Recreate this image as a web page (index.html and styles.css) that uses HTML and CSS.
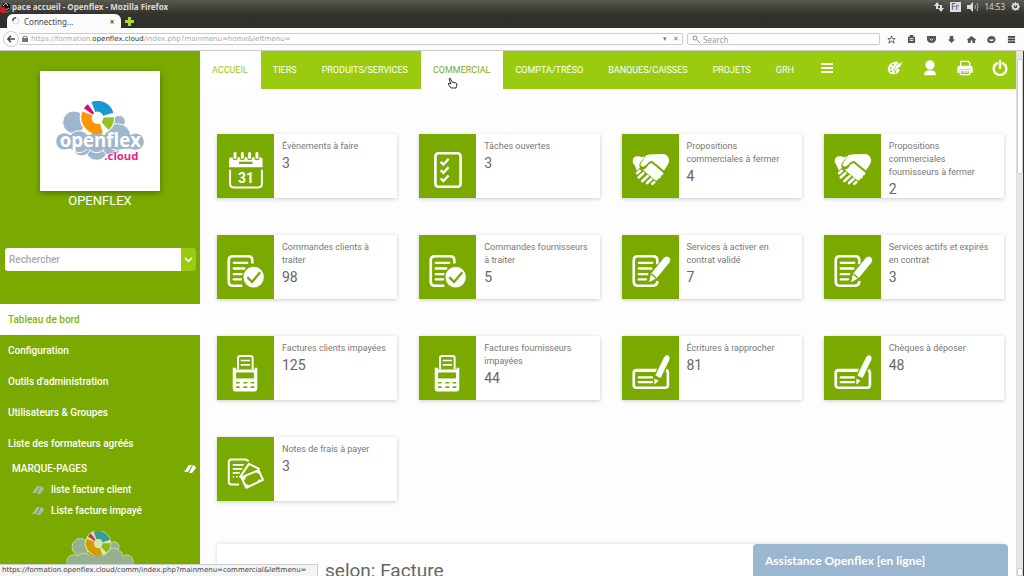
FILE: index.html
```html
<!DOCTYPE html>
<html lang="fr">
<head>
<meta charset="utf-8">
<title>Espace accueil - Openflex</title>
<link rel="stylesheet" href="styles.css">
</head>
<body>
<svg class="defs" aria-hidden="true">
  <symbol id="doc" viewBox="0 0 171 193">
    <path d="M76 153H48Q35 153 35 141V76Q35 64 48 64H93Q106 64 106 76V86" fill="none" stroke="#fff" stroke-width="8"/>
    <path d="M50 84H91M50 101H82M50 118H74M50 134H72" stroke="#fff" stroke-width="7" stroke-linecap="round"/>
  </symbol>
  <symbol id="order" viewBox="0 0 171 193">
    <use href="#doc" width="171" height="193"/>
    <circle cx="110" cy="127" r="34" fill="#7aaa00"/><circle cx="110" cy="127" r="31" fill="#fff"/>
    <path d="M91 127l14 15 25-30" fill="none" stroke="#7aaa00" stroke-width="7"/>
  </symbol>
  <symbol id="contract" viewBox="0 0 171 193">
    <path d="M106 88V76Q106 64 93 64H48Q35 64 35 76V141Q35 153 48 153H93Q106 153 106 139" fill="none" stroke="#fff" stroke-width="8"/>
    <path d="M50 84H91M50 101H88M50 118H76M50 134H72" stroke="#fff" stroke-width="7" stroke-linecap="round"/>
    <path d="M79 145l7-29 40-49q8-7 17 0 6 7 1 16l-39 48z" fill="#fff" stroke="#7aaa00" stroke-width="3"/>
    <path d="M88 117l15 14" stroke="#7aaa00" stroke-width="4"/>
  </symbol>
  <symbol id="hands" viewBox="0 0 171 193">
    <path d="M32 78Q34 68 46 67Q54 66 58 70L70 67L53 88Q50 96 54 102L44 110Q40 96 32 86Z" fill="#fff"/>
    <path d="M73 64Q84 60 98 61L124 60Q138 62 142 78Q142 90 126 110L90 81Q80 83 73 93Q64 102 56 96Q54 91 58 86Z" fill="#fff"/>
    <path d="M78 94Q82 87 90 88L124 117Q125 126 116 125Q119 135 109 134Q109 143 99 139L62 108Q72 106 78 94Z" fill="#fff"/>
    <path d="M45 118l8-7M50 131l14-13M61 142l16-15M75 148l13-12M91 150l6-5" stroke="#fff" stroke-width="8" stroke-linecap="round"/>
  </symbol>
  <symbol id="terminal" viewBox="0 0 171 193">
    <path d="M63 100V66Q63 60 69 60H101Q107 60 107 66V100" fill="none" stroke="#fff" stroke-width="6"/>
    <path d="M71 74H99M71 87H99" stroke="#fff" stroke-width="5"/>
    <path d="M47 96H57V101H113V96H121V160Q121 167 114 167H54Q47 167 47 160Z" fill="#fff"/>
    <path d="M57 110H111V128H57Z" fill="#7aaa00"/>
    <path d="M57 141H68M79 141H91M101 141H112M57 154H68M79 154H91M101 154H112" stroke="#7aaa00" stroke-width="5"/>
  </symbol>
  <symbol id="cheque" viewBox="0 0 171 193">
    <rect x="35" y="103" width="103" height="53" rx="8" fill="none" stroke="#fff" stroke-width="8"/>
    <path d="M38 104H136" stroke="#fff" stroke-width="9"/>
    <path d="M50 125H90M50 139H90" stroke="#fff" stroke-width="7" stroke-linecap="round"/>
    <path d="M96 152L94 122 121 66Q128 56 140 60 149 66 144 78L119 134Z" fill="#7aaa00"/>
    <path d="M100 119L126 65Q132 56 139 59 145 63 142 72L116 127ZM97 129L110 134 97 147Z" fill="#fff"/>
  </symbol>
  <symbol id="tag" viewBox="0 0 12 10"><path d="M0 8L5 1H8L4 8ZM5 9L9 1 11 2 12 4 8 9Z" fill="currentColor"/></symbol>
  <symbol id="cloud" viewBox="160 120 270 180">
    <g class="cloud-body"><circle cx="217" cy="184" r="34"/><circle cx="352" cy="182" r="19"/><circle cx="285" cy="265" r="33"/><circle cx="240" cy="258" r="27"/><circle cx="330" cy="255" r="29"/><circle cx="348" cy="228" r="40"/><circle cx="188" cy="241" r="26"/><circle cx="402" cy="242" r="26"/><circle cx="232" cy="242" r="33"/><circle cx="285" cy="244" r="31"/></g>
    <rect x="180" y="222" width="232" height="41" rx="18" class="cloud-fill"/>
    <path d="M287 118A52 52 0 0 1 340 170 52 52 0 0 1 312 217Q285 205 262 216A52 52 0 0 1 287 118Z" fill="#fff"/>
    <g fill="none" stroke-width="32">
      <path d="M275 138A34 34 0 0 1 320 160" stroke="#1b98d4"/>
      <path d="M321 169A34 34 0 0 1 310 195" stroke="#94c11f"/>
      <path d="M299 201A34 34 0 0 1 257 157" stroke="#ff9500"/>
      <path d="M260 151A34 34 0 0 1 268 143" stroke="#e6007e"/>
    </g>
    <circle cx="287" cy="172" r="17" fill="#fff"/>
  </symbol>
</svg>

<header class="browser">
  <div class="titlebar">
    <svg class="record" viewBox="0 0 12 12"><circle cx="6" cy="6" r="5" fill="#111" stroke="#777"/><path d="M3 5l3-3 2 3M6 9l3-2" stroke="#ccc" fill="none"/><circle cx="3" cy="9" r="3" fill="#e11"/></svg>
    <span class="window-title">pace accueil - Openflex - Mozilla Firefox</span>
    <div class="tray">
      <svg viewBox="0 0 10 10" width="10" height="10"><path d="M3 7V3M7 3v4" stroke="#ddd" stroke-width="2"/><path d="M0 4l3-4 3 4zM4 6l3 4 3-4z" fill="#ddd"/></svg>
      <span class="lang">Fr</span>
      <svg viewBox="0 0 12 10" width="12" height="10"><path d="M0 3h3l3-3v10L3 7H0z" fill="#ddd"/><path d="M8 3q1 2 0 4M10 1q2 4 0 8" stroke="#aaa" fill="none"/></svg>
      <span class="clock">14:53</span>
      <svg viewBox="0 0 10 10" width="9" height="9"><circle cx="5" cy="5" r="3" fill="none" stroke="#ddd" stroke-width="2"/><circle cx="5" cy="5" r="4" fill="none" stroke="#ddd" stroke-width="2" stroke-dasharray="1 2"/><path d="M5 0v5" stroke="#ddd"/></svg>
    </div>
  </div>
  <div class="tabstrip">
    <div class="tab"><svg viewBox="0 0 10 10" width="8" height="8"><circle cx="5" cy="5" r="4" fill="none" stroke="#ccc"/><path d="M5 1A4 4 0 0 0 1 5" fill="none" stroke="#555" stroke-width="2"/></svg><span class="tab-title">Connecting…</span><button class="tab-close" aria-label="Close tab">×</button></div>
    <button class="tab-new" aria-label="New tab"><svg viewBox="0 0 9 9" width="9" height="9"><path d="M3 0h3v3h3v3H6v3H3V6H0V3h3z" fill="#a6d838"/></svg></button>
  </div>
  <div class="toolbar">
    <button class="back" aria-label="Back"><svg viewBox="0 0 10 10" width="8" height="8"><path d="M5 1L1 5l4 4M1 5h9" fill="none" stroke="#444" stroke-width="2"/></svg></button>
    <div class="urlbar">
      <svg viewBox="0 0 6 8" width="6" height="8"><path d="M0 3h6v4H0z" fill="#777"/><path d="M1 4V2q2-2 4 0v2" fill="none" stroke="#777"/></svg>
      <div class="url" role="textbox" aria-label="Address" contenteditable="true">https://formation.<span class="domain">openflex.cloud</span>/index.php?mainmenu=home&amp;leftmenu=</div>
      <span class="url-tools">▾</span><span class="url-tools">✕</span>
    </div>
    <label class="websearch"><svg viewBox="0 0 8 8" width="8" height="8"><circle cx="3" cy="3" r="2" fill="none" stroke="#888"/><path d="M5 5l3 3" stroke="#888"/></svg><input type="text" placeholder="Search" aria-label="Search"></label>
    <div class="tools">
      <svg viewBox="0 0 10 10"><path d="M5 1l1 3 3 0-2 2 1 3-3-2-3 2 1-3-2-2 3 0z" fill="none" stroke="#555"/></svg>
      <svg viewBox="0 0 10 10"><path d="M1 2h8v7H1zM3 2V0h4v2" fill="#555"/><path d="M3 4h4M3 6h4" stroke="#fff"/></svg>
      <svg viewBox="0 0 10 10"><path d="M0 1h10v4Q9 9 5 9 1 9 0 5z" fill="#555"/><path d="M3 4l2 2 2-2" fill="none" stroke="#fff"/></svg>
      <svg viewBox="0 0 10 10"><path d="M3 1h4v4h2L5 9 1 5h2z" fill="#555"/></svg>
      <svg viewBox="0 0 10 10"><path d="M5 1L0 5l1 1v3h3V6h2v3h3V6l1-1z" fill="#555"/></svg>
      <svg viewBox="0 0 10 10"><path d="M1 8Q-1 5 2 2 5 0 8 2 11 5 8 8 5 10 1 8z" fill="#555"/><path d="M2 5q3 4 6 0z" fill="#fff"/></svg>
      <svg viewBox="0 0 10 10"><path d="M1 2h8M1 5h8M1 8h8" stroke="#444" stroke-width="2"/></svg>
    </div>
  </div>
</header>

<div class="viewport">
  <aside class="sidebar">
    <div class="logo"><svg viewBox="160 120 270 180" width="90" height="60" role="img" aria-label="openflex.cloud">
      <use href="#cloud" x="160" y="120" width="270" height="180"/>
      <text class="logo-name" x="296" y="258">openflex</text>
      <text class="logo-cloud" x="308" y="297">.cloud</text>
    </svg></div>
    <div class="company">OPENFLEX</div>
    <form class="search"><input type="text" placeholder="Rechercher" aria-label="Rechercher"><button type="button" aria-label="Options"><svg viewBox="0 0 10 8" width="9" height="7"><path d="M1 2l4 4 4-4" fill="none" stroke="#fff" stroke-width="2"/></svg></button></form>
    <nav class="menu">
      <a class="current" href="#">Tableau de bord</a>
      <a href="#">Configuration</a>
      <a href="#">Outils d'administration</a>
      <a href="#">Utilisateurs &amp; Groupes</a>
      <a href="#">Liste des formateurs agréés</a>
    </nav>
    <div class="bookmarks-head"><span>MARQUE-PAGES</span><svg width="12" height="10"><use href="#tag"/></svg></div>
    <div class="bookmarks">
      <a href="#"><svg width="12" height="10"><use href="#tag"/></svg>liste facture client</a>
      <a href="#"><svg width="12" height="10"><use href="#tag"/></svg>Liste facture impayé</a>
    </div>
    <svg class="foot-logo" viewBox="160 120 270 180"><use href="#cloud" x="160" y="120" width="270" height="180"/></svg>
  </aside>

  <main class="main">
    <nav class="topnav">
      <a class="active" href="#">ACCUEIL</a><a href="#">TIERS</a><a href="#">PRODUITS/SERVICES</a><a class="hover" href="#">COMMERCIAL<svg class="pointer" viewBox="0 0 10 11"><path d="M1 1l1-1 2 4 4 1 1 1-1 4H3L0 6l1-1 2 1z" fill="#fff" stroke="#333"/></svg></a><a href="#">COMPTA/TRÉSO</a><a href="#">BANQUES/CAISSES</a><a href="#">PROJETS</a><a href="#">GRH</a>
      <button class="more" aria-label="Menu"><svg viewBox="0 0 12 10" width="12" height="10"><path d="M0 1h12M0 5h12M0 9h12" stroke="#fff" stroke-width="2"/></svg></button>
      <div class="actions">
        <button aria-label="Thème"><svg viewBox="0 0 48 48"><path d="M2 27Q4 9 24 5 34 4 34 10 31 15 28 20 31 26 38 28 36 41 22 43 2 43 2 27Z" fill="#fff"/><path d="M20 27L30 13 48 4 41 19 29 28 20 31Z" fill="#fff" stroke="#9acb0f" stroke-width="2"/><g fill="#9acb0f"><circle cx="11" cy="24" r="3"/><circle cx="18" cy="14" r="3"/><circle cx="13" cy="34" r="3"/><circle cx="25" cy="36" r="3"/></g></svg></button>
        <button aria-label="Utilisateur"><svg viewBox="0 0 48 48"><circle cx="24" cy="15" r="14" fill="#fff"/><path d="M6 46Q6 31 24 31T42 46Z" fill="#fff"/></svg></button>
        <button aria-label="Imprimer"><svg viewBox="0 0 48 48"><path d="M11 18V4H33L38 9V18" fill="none" stroke="#fff" stroke-width="4"/><path d="M1 38V23Q1 17 7 17H41Q47 17 47 23V38H40V28H8V38Z" fill="#fff"/><path d="M10 31H38V44H10Z" fill="none" stroke="#fff" stroke-width="4"/><path d="M15 36H34" stroke="#fff" stroke-width="3"/></svg></button>
        <button aria-label="Déconnexion"><svg viewBox="0 0 48 48"><path d="M15 10Q5 15 5 26A19 19 0 0 0 43 26Q43 15 33 10M24 3V24" fill="none" stroke="#fff" stroke-width="7" stroke-linecap="round"/></svg></button>
      </div>
    </nav>

    <section class="cards">
      <a class="card" href="#"><span class="tile"><svg viewBox="0 0 171 193"><path d="M36 100V78Q36 70 44 70H129Q137 70 137 78V100Z" fill="#fff"/><path d="M54 60V72M76 60V72M98 60V72M120 60V72" stroke="#7aaa00" stroke-width="15" stroke-linecap="round"/><path d="M54 59V71M76 59V71M98 59V71M120 59V71" stroke="#fff" stroke-width="9" stroke-linecap="round"/><path d="M66 87H107" stroke="#7aaa00" stroke-width="7"/><path d="M39 108V151Q39 161 49 161H125Q135 161 135 151V108" fill="none" stroke="#fff" stroke-width="6"/><text class="day" x="87" y="147">31</text></svg></span><span class="info"><span class="label">Évènements à faire</span><span class="count">3</span></span></a>
      <a class="card" href="#"><span class="tile"><svg viewBox="0 0 171 193"><rect x="49" y="58" width="76" height="101" rx="9" fill="none" stroke="#fff" stroke-width="8"/><path d="M65 84l8 8 16-17M65 109l8 8 16-17M65 134l8 8 16-17" fill="none" stroke="#fff" stroke-width="7"/></svg></span><span class="info"><span class="label">Tâches ouvertes</span><span class="count">3</span></span></a>
      <a class="card" href="#"><span class="tile"><svg><use href="#hands"/></svg></span><span class="info"><span class="label">Propositions commerciales à fermer</span><span class="count">4</span></span></a>
      <a class="card" href="#"><span class="tile"><svg><use href="#hands"/></svg></span><span class="info"><span class="label">Propositions commerciales fournisseurs à fermer</span><span class="count">2</span></span></a>

      <a class="card" href="#"><span class="tile"><svg><use href="#order"/></svg></span><span class="info"><span class="label">Commandes clients à traiter</span><span class="count">98</span></span></a>
      <a class="card" href="#"><span class="tile"><svg><use href="#order"/></svg></span><span class="info"><span class="label">Commandes fournisseurs à traiter</span><span class="count">5</span></span></a>
      <a class="card" href="#"><span class="tile"><svg><use href="#contract"/></svg></span><span class="info"><span class="label">Services à activer en contrat validé</span><span class="count">7</span></span></a>
      <a class="card" href="#"><span class="tile"><svg><use href="#contract"/></svg></span><span class="info"><span class="label">Services actifs et expirés en contrat</span><span class="count">3</span></span></a>

      <a class="card" href="#"><span class="tile"><svg><use href="#terminal"/></svg></span><span class="info"><span class="label">Factures clients impayées</span><span class="count">125</span></span></a>
      <a class="card" href="#"><span class="tile"><svg><use href="#terminal"/></svg></span><span class="info"><span class="label">Factures fournisseurs impayées</span><span class="count">44</span></span></a>
      <a class="card" href="#"><span class="tile"><svg><use href="#cheque"/></svg></span><span class="info"><span class="label">Écritures à rapprocher</span><span class="count">81</span></span></a>
      <a class="card" href="#"><span class="tile"><svg><use href="#cheque"/></svg></span><span class="info"><span class="label">Chèques à déposer</span><span class="count">48</span></span></a>

      <a class="card" href="#"><span class="tile"><svg viewBox="0 0 171 193"><path d="M66 143H44Q35 143 35 134V77Q35 68 44 68H84Q92 68 94 74" fill="none" stroke="#fff" stroke-width="6"/><path d="M47 84H80M47 96H76M47 108H68M47 120H51M57 120H62" stroke="#fff" stroke-width="5"/><path d="M68 122L96 81 128 97" fill="none" stroke="#fff" stroke-width="6" stroke-linejoin="round"/><path d="M73 122L125 100 138 129 88 153Z" fill="#7aaa00" stroke="#fff" stroke-width="6" stroke-linejoin="round"/><path d="M72 120l18-5-8 16zM128 100l-14 5 16 8zM138 130l-14-2-3 9zM86 154l15-7-17-6z" fill="#fff"/></svg></span><span class="info"><span class="label">Notes de frais à payer</span><span class="count">3</span></span></a>
    </section>

    <section class="panel"><h2><span class="initial">G</span><span>selon: Facture</span></h2></section>
    <button class="assist">Assistance Openflex [en ligne]</button>
  </main>
  <div class="scrollbar"><span class="thumb"></span><span class="arrow"></span></div>
  <div class="status">https://formation.openflex.cloud/comm/index.php?mainmenu=commercial&amp;leftmenu=</div>
</div>
</body>
</html>
```
FILE: styles.css
```css
* { box-sizing: border-box; }
body { margin: 0; height: 100vh; overflow: hidden; display: flex; flex-direction: column; font-family: Roboto, "Liberation Sans", sans-serif; font-size: 10px; color: #555; background: #fdfdfd; }
a { color: inherit; text-decoration: none; }
button { border: 0; padding: 0; background: none; font: inherit; color: inherit; display: flex; align-items: center; justify-content: center; }
input { border: 0; padding: 0; outline: 0; background: none; font: inherit; min-width: 0; }
.defs { position: absolute; width: 0; height: 0; }

.browser { font-family: "Noto Sans", "Open Sans", sans-serif; font-size: 8px; background: linear-gradient(#5a594f, #33322d 14px, #2f2e29 28px); flex: none; }
.titlebar { height: 13px; display: flex; align-items: center; color: #dfdbd2; }
.record { width: 12px; height: 12px; }
.window-title { font-weight: 700; flex: 1; line-height: 12px; }
.tray { display: flex; align-items: center; gap: 6px; padding-right: 4px; }
.lang { background: #ddd; color: #444; width: 11px; height: 10px; line-height: 10px; text-align: center; }
.clock { line-height: 12px; }
.tabstrip { height: 15px; display: flex; align-items: flex-end; padding-left: 7px; gap: 4px; }
.tab { width: 114px; height: 14px; background: #fcfcfc; border-radius: 6px 6px 0 0; display: flex; align-items: center; gap: 4px; padding: 0 5px; color: #444; }
.tab-title { flex: 1; }
.tab-close { font-weight: 700; width: 8px; height: 10px; }
.tab-new { height: 14px; }
.toolbar { height: 23px; background: #fcfcfc; border-bottom: 1px solid #ccc; display: flex; align-items: center; padding: 0 8px 0 3px; }
.back { width: 16px; height: 16px; border: 1px solid #ccc; border-radius: 50%; background: #fff; }
.urlbar { flex: 1; height: 12px; border: 1px solid #ccc; border-left: 0; border-radius: 0 2px 2px 0; background: #fff; display: flex; align-items: center; gap: 3px; padding: 0 2px 0 3px; }
.url { flex: 1; color: #aaa; white-space: nowrap; font: 7px/10px "DejaVu Sans", sans-serif; }
.domain { color: #333; }
.url-tools { color: #777; font-size: 7px; width: 7px; line-height: 10px; }
.websearch { width: 193px; height: 12px; margin-left: 4px; border: 1px solid #ccc; border-radius: 2px; background: #fff; display: flex; align-items: center; gap: 3px; padding: 0 4px; }
.websearch input { flex: 1; height: 10px; }
.websearch input::placeholder { color: #999; }
.tools { width: 129px; margin-left: 7px; display: flex; justify-content: space-between; }
.tools svg { width: 9px; height: 9px; }

.viewport { position: relative; flex: 1; min-height: 0; display: flex; }
.sidebar { width: 200px; flex: none; background: #7aaa00; color: #fff; display: flex; flex-direction: column; padding-top: 20px; overflow: hidden; font-weight: 500; }
.logo { width: 120px; height: 120px; flex: none; margin: 0 auto; background: #fff; display: flex; align-items: center; justify-content: center; box-shadow: 0 2px 6px rgba(0, 0, 0, .35); }
.cloud-body { fill: #9fb6cd; stroke: #fff; stroke-width: 3px; }
.cloud-fill { fill: #9fb6cd; }
.logo-name { font: 700 56px "Open Sans", sans-serif; fill: #fff; text-anchor: middle; }
.logo-cloud { font: 700 34px "Open Sans", sans-serif; fill: #e6248c; stroke: #fff; stroke-width: 4px; paint-order: stroke; }
.company { text-align: center; font-size: 13px; font-weight: 400; line-height: 20px; }
.search { display: flex; height: 23px; margin: 37px 4px 33px 5px; flex: none; border-radius: 3px; overflow: hidden; }
.search input { flex: 1; background: #fff; padding-left: 4px; }
.search input::placeholder { color: #aaa; }
.search button { width: 15px; background: #9acb0f; }
.menu a { display: block; padding: 0 8px; line-height: 31px; }
.menu .current { background: #fff; color: #86b300; }
.bookmarks-head { display: flex; justify-content: space-between; align-items: center; line-height: 18px; padding: 1px 4px 0 12px; }
.bookmarks { padding: 1px 0 10px 32px; }
.bookmarks a { display: flex; align-items: center; gap: 7px; line-height: 21px; }
.bookmarks svg { color: #a5bcb0; }
.foot-logo { width: 68px; height: 45px; flex: none; margin: 0 auto; opacity: .7; }

.main { position: relative; flex: 1; min-width: 0; background: #fdfdfd; overflow: hidden; }
.topnav { height: 38px; background: #9acb0f; color: #fff; display: flex; }
.topnav a { padding: 0 13px 0 12px; font-size: 9px; line-height: 38px; white-space: nowrap; position: relative; }
.topnav .active, .topnav .hover { background: #fff; color: #9acb0f; }
.topnav .hover { color: #86a818; }
.pointer { position: absolute; left: 27px; top: 27px; width: 10px; height: 11px; }
.more { padding: 0 14px; height: 34px; }
.actions { margin-left: auto; display: flex; align-items: center; gap: 19px; padding: 0 8px 4px 0; }
.actions svg { width: 16px; height: 16px; display: block; }

.cards { display: grid; grid-template-columns: repeat(4, 1fr); grid-auto-rows: 64px; gap: 37px 22px; padding: 45px 12px 0 17px; }
.card { display: flex; background: #fff; box-shadow: 0 1px 4px rgba(0, 0, 0, .2); }
.tile { width: 57px; flex: none; background: #7aaa00; }
.tile svg { display: block; width: 100%; height: 100%; }
.day { font: 700 42px Roboto, sans-serif; fill: #fff; text-anchor: middle; }
.info { flex: 1; padding: 6px 8px 0; display: flex; flex-direction: column; }
.label { font-size: 9px; line-height: 13px; color: #777; }
.count { font-size: 14px; line-height: 20px; color: #666; }
.panel { margin: 43px 12px 0 17px; height: 90px; background: #fff; box-shadow: 0 0 4px rgba(0, 0, 0, .15); padding: 16px 28px; }
.panel h2 { margin: 0; font-size: 19px; line-height: 22px; font-weight: 400; color: #666; display: flex; }
.initial { width: 80px; }
.assist { position: absolute; right: 8px; bottom: 0; width: 255px; height: 32px; background: #9bb6cf; color: #fff; border-radius: 4px 4px 0 0; justify-content: flex-start; padding-left: 12px; font: 700 12px Lato, sans-serif; }
.scrollbar { width: 8px; background: #e8e6e3; border-right: 1px solid #333; border-left: 1px solid #ddd; padding-top: 8px; display: flex; flex-direction: column; justify-content: space-between; }
.thumb { height: 115px; background: #fff; border: 1px solid #ccc; border-radius: 2px; }
.arrow { height: 8px; background: #fff; border: 1px solid #ccc; border-radius: 2px; }
.status { position: absolute; left: 0; bottom: 0; padding: 0 11px 0 2px; background: #f4f4f4; border-top: 1px solid #ccc; border-right: 1px solid #ccc; color: #444; font: 7px/11px "DejaVu Sans", sans-serif; white-space: nowrap; }
```
